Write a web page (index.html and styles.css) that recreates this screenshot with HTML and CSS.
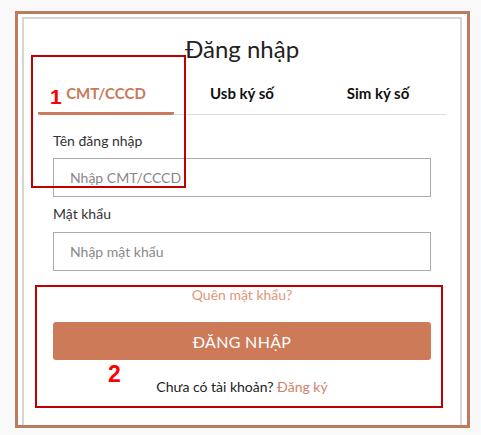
FILE: index.html
```html
<!DOCTYPE html>
<html>
<head>
  <meta charset="UTF-8">
  <title>Đăng nhập</title>
  <link rel="stylesheet" href="styles.css">
</head>
<body>
  <div class="frame">
    <div class="card">
      <h1 class="title">Đăng nhập</h1>
      <ul class="tabs">
        <li class="tab active">CMT/CCCD</li>
        <li class="tab">Usb ký số</li>
        <li class="tab">Sim ký số</li>
      </ul>
      <form class="form">
        <label class="label" for="user">Tên đăng nhập</label>
        <input class="input" id="user" type="text" placeholder="Nhập CMT/CCCD">
        <label class="label" for="pass">Mật khẩu</label>
        <input class="input" id="pass" type="password" placeholder="Nhập mật khẩu">
        <a class="forgot" href="#">Quên mật khẩu?</a>
        <button class="btn" type="button">ĐĂNG NHẬP</button>
        <p class="signup">Chưa có tài khoản? <a href="#">Đăng ký</a></p>
      </form>
    </div>
  </div>

  <!-- khung chú thích -->
  <div class="mark mark-1"><span class="num">1</span></div>
  <div class="mark mark-2"><span class="num">2</span></div>
</body>
</html>
```

FILE: styles.css
```css
/* Estilos */
body {
  margin: 0;
  padding: 0;
  background-color: #f9f9f9;
  font-family: Lato, "Open Sans", sans-serif;
  color: #222;
}

.frame {
  box-sizing: border-box;
  width: 455px;
  height: 417px;
  margin: 11px 0 0 15px;
  padding: 3px 5px 0 4px;
  border: 3px solid #b97c5f;
  background-color: #fff;
  overflow: hidden;
}

.card {
  border: 2px solid #d6d6d6;
  padding: 0 14px 60px;
}

.title {
  margin: 0;
  padding-top: 14px;
  font-size: 24px;
  font-weight: normal;
  line-height: 32px;
  text-align: center;
  color: #222;
}

.tabs {
  list-style-type: none;
  margin: 0;
  padding: 0;
  display: flex;
  border-bottom: 1px solid #dedede;
}

.tab {
  flex: 1;
  text-align: center;
  font-size: 15px;
  font-weight: bold;
  line-height: 20px;
  padding: 18px 0 9px;
  border-bottom: 3px solid transparent;
  margin-bottom: -1px;
  color: #111;
}

.tab.active {
  color: #c9795a;
  border-bottom-color: #cb7b5b;
  border-radius: 0 0 2px 2px;
}

.form {
  display: flex;
  flex-direction: column;
  padding: 17px 15px 0;
}

.label {
  font-size: 14px;
  line-height: 18px;
  color: #333;
  margin-bottom: 8px;
}

.input {
  height: 39px;
  box-sizing: border-box;
  border: 1px solid #aaa;
  padding: 0 16px;
  font-family: inherit;
  font-size: 14px;
  margin-bottom: 8px;
}

.input::placeholder {
  color: #888;
}

.form .input + .label {
  margin-bottom: 9px;
}

.forgot {
  align-self: center;
  margin-top: 6px;
  font-size: 14px;
  line-height: 20px;
  color: #e0977b;
  text-decoration: none;
}

.btn {
  margin-top: 17px;
  height: 38px;
  border: none;
  border-radius: 3px;
  background-color: #cd7a59;
  color: #fff;
  font-family: inherit;
  font-size: 16px;
  letter-spacing: 0.3px;
}

.signup {
  margin: 17px 0 0;
  text-align: center;
  font-size: 14px;
  line-height: 20px;
  color: #222;
}

.signup a {
  color: #d0826a;
  text-decoration: none;
}

/* chú thích đỏ */
.mark {
  position: absolute;
  border: 2px solid #c00000;
  box-sizing: border-box;
}

.mark-1 {
  left: 31px;
  top: 55px;
  width: 155px;
  height: 133px;
}

.mark-2 {
  left: 35px;
  top: 285px;
  width: 408px;
  height: 123px;
}

.num {
  position: absolute;
  font-family: "Liberation Sans", Arial, sans-serif;
  font-weight: bold;
  color: #f00;
}

.mark-1 .num {
  left: 17px;
  top: 28px;
  font-size: 21px;
}

.mark-2 .num {
  left: 71px;
  top: 74px;
  font-size: 23px;
}
```
